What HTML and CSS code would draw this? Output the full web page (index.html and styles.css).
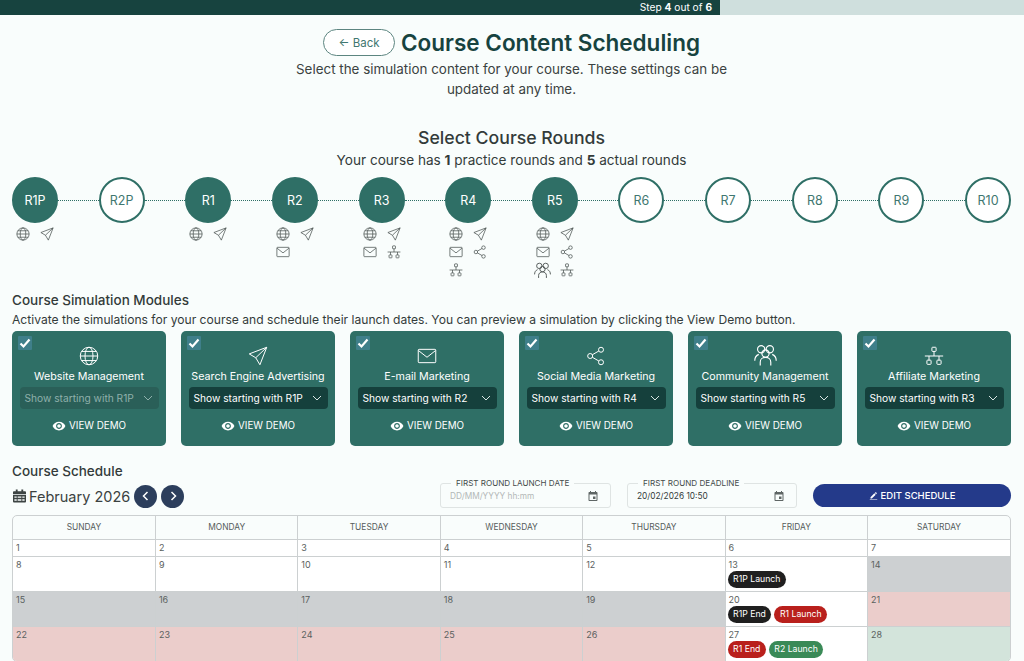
FILE: index.html
```html
<!DOCTYPE html>
<html lang="en">
<head>
    <meta charset="UTF-8">
    <title>Course Content Scheduling</title>
    <link rel="stylesheet" href="styles.css">
</head>
<body>

<!-- icon sprite, used all over the page -->
<svg class="sprite" xmlns="http://www.w3.org/2000/svg">
    <symbol id="i-globe" viewBox="0 0 24 24"><circle cx="12" cy="12" r="10.5"/><ellipse cx="12" cy="12" rx="4.8" ry="10.5"/><path d="M1.5 12h21M3.2 6.5h17.6M3.2 17.5h17.6"/></symbol>
    <symbol id="i-send" viewBox="0 0 24 24"><path d="M22.5 1.5 1.5 9.5l7.8 4.6 5 8.4zM22.5 1.5 9.3 14.1"/></symbol>
    <symbol id="i-mail" viewBox="0 0 24 24"><rect x="1.5" y="4" width="21" height="16" rx="1"/><path d="m1.8 5.5 10.2 8 10.2-8"/></symbol>
    <symbol id="i-share" viewBox="0 0 24 24"><circle cx="18" cy="4.5" r="3"/><circle cx="5" cy="12" r="3"/><circle cx="18" cy="19.5" r="3"/><path d="m7.6 10.5 7.8-4.500M7.6 13.500l7.8 4.500"/></symbol>
    <symbol id="i-people" viewBox="0 0 24 24"><circle cx="7.5" cy="5.5" r="3.8"/><circle cx="16.5" cy="5.5" r="3.8"/><circle cx="12" cy="10" r="3.8"/><path d="M6.500 22.500v-3.500c0-3 2.400-5 5.500-5s5.500 2 5.500 5v3.500M5 10.800C2.500 11.800.8 14 .8 17.500M19 10.800c2.500 1 4.200 3.200 4.200 6.700"/></symbol>
    <symbol id="i-tree" viewBox="0 0 24 24"><rect x="9.500" y="1.500" width="5" height="5" rx=".8"/><rect x="3.500" y="17" width="5" height="5" rx=".8"/><rect x="15.500" y="17" width="5" height="5" rx=".8"/><path d="M12 6.500v5.500M1 12h22M6 12v5M18 12v5"/></symbol>
    <symbol id="i-eye" viewBox="0 0 24 24"><path d="M12 4.500C7 4.500 2.730 7.610 1 12c1.730 4.390 6 7.500 11 7.500s9.270-3.110 11-7.500c-1.730-4.390-6-7.500-11-7.500zM12 17c-2.760 0-5-2.240-5-5s2.240-5 5-5 5 2.240 5 5-2.240 5-5 5zm0-8c-1.660 0-3 1.340-3 3s1.340 3 3 3 3-1.340 3-3-1.340-3-3-3z"/></symbol>
    <symbol id="i-event" viewBox="0 0 24 24"><path d="M19 4h-1V2h-2v2H8V2H6v2H5c-1.110 0-2 .900-2 2v14c0 1.100.890 2 2 2h14c1.100 0 2-.900 2-2V6c0-1.100-.900-2-2-2zm0 16H5V9h14v11zM12 13h5v5h-5z"/></symbol>
</svg>

<div class="progress">
    <div class="progress-done">Step <b>4</b> out of <b>6</b></div>
</div>

<main>
    <header class="intro">
        <div class="intro-title">
            <button class="back-btn">&#8592; Back</button>
            <h1>Course Content Scheduling</h1>
        </div>
        <p>Select the simulation content for your course. These settings can be<br>updated at any time.</p>
    </header>

    <section class="rounds-head">
        <h2>Select Course Rounds</h2>
        <p>Your course has <b>1</b> practice rounds and <b>5</b> actual rounds</p>
    </section>

    <div class="rounds">
        <div class="round">
            <div class="circle on">R1P</div>
            <div class="round-icons">
                <svg class="ico"><use href="#i-globe"/></svg><svg class="ico"><use href="#i-send"/></svg>
            </div>
        </div>
        <div class="link"></div>
        <div class="round"><div class="circle">R2P</div></div>
        <div class="link"></div>
        <div class="round">
            <div class="circle on">R1</div>
            <div class="round-icons">
                <svg class="ico"><use href="#i-globe"/></svg><svg class="ico"><use href="#i-send"/></svg>
            </div>
        </div>
        <div class="link"></div>
        <div class="round">
            <div class="circle on">R2</div>
            <div class="round-icons">
                <svg class="ico"><use href="#i-globe"/></svg><svg class="ico"><use href="#i-send"/></svg>
                <svg class="ico"><use href="#i-mail"/></svg>
            </div>
        </div>
        <div class="link"></div>
        <div class="round">
            <div class="circle on">R3</div>
            <div class="round-icons">
                <svg class="ico"><use href="#i-globe"/></svg><svg class="ico"><use href="#i-send"/></svg>
                <svg class="ico"><use href="#i-mail"/></svg><svg class="ico"><use href="#i-tree"/></svg>
            </div>
        </div>
        <div class="link"></div>
        <div class="round">
            <div class="circle on">R4</div>
            <div class="round-icons">
                <svg class="ico"><use href="#i-globe"/></svg><svg class="ico"><use href="#i-send"/></svg>
                <svg class="ico"><use href="#i-mail"/></svg><svg class="ico"><use href="#i-share"/></svg>
                <svg class="ico"><use href="#i-tree"/></svg>
            </div>
        </div>
        <div class="link"></div>
        <div class="round">
            <div class="circle on">R5</div>
            <div class="round-icons">
                <svg class="ico"><use href="#i-globe"/></svg><svg class="ico"><use href="#i-send"/></svg>
                <svg class="ico"><use href="#i-mail"/></svg><svg class="ico"><use href="#i-share"/></svg>
                <svg class="ico wide"><use href="#i-people"/></svg><svg class="ico"><use href="#i-tree"/></svg>
            </div>
        </div>
        <div class="link"></div>
        <div class="round"><div class="circle">R6</div></div>
        <div class="link"></div>
        <div class="round"><div class="circle">R7</div></div>
        <div class="link"></div>
        <div class="round"><div class="circle">R8</div></div>
        <div class="link"></div>
        <div class="round"><div class="circle">R9</div></div>
        <div class="link"></div>
        <div class="round"><div class="circle">R10</div></div>
    </div>

    <section class="modules">
        <h3>Course Simulation Modules</h3>
        <p>Activate the simulations for your course and schedule their launch dates. You can preview a simulation by clicking the View Demo button.</p>
        <div class="cards">
            <div class="card">
                <span class="check"><svg viewBox="0 0 14 14"><path d="M2.500 7.500 5.500 10.500 11.500 3.500"/></svg></span>
                <svg class="card-ico"><use href="#i-globe"/></svg>
                <div class="card-name">Website Management</div>
                <div class="pick off"><span>Show starting with R1P</span><svg viewBox="0 0 12 12"><path d="m2 4 4 4 4-4"/></svg></div>
                <div class="demo"><svg><use href="#i-eye"/></svg>VIEW DEMO</div>
            </div>
            <div class="card">
                <span class="check"><svg viewBox="0 0 14 14"><path d="M2.500 7.500 5.500 10.500 11.500 3.500"/></svg></span>
                <svg class="card-ico"><use href="#i-send"/></svg>
                <div class="card-name">Search Engine Advertising</div>
                <div class="pick"><span>Show starting with R1P</span><svg viewBox="0 0 12 12"><path d="m2 4 4 4 4-4"/></svg></div>
                <div class="demo"><svg><use href="#i-eye"/></svg>VIEW DEMO</div>
            </div>
            <div class="card">
                <span class="check"><svg viewBox="0 0 14 14"><path d="M2.500 7.500 5.500 10.500 11.500 3.500"/></svg></span>
                <svg class="card-ico"><use href="#i-mail"/></svg>
                <div class="card-name">E-mail Marketing</div>
                <div class="pick"><span>Show starting with R2</span><svg viewBox="0 0 12 12"><path d="m2 4 4 4 4-4"/></svg></div>
                <div class="demo"><svg><use href="#i-eye"/></svg>VIEW DEMO</div>
            </div>
            <div class="card">
                <span class="check"><svg viewBox="0 0 14 14"><path d="M2.500 7.500 5.500 10.500 11.500 3.500"/></svg></span>
                <svg class="card-ico"><use href="#i-share"/></svg>
                <div class="card-name">Social Media Marketing</div>
                <div class="pick"><span>Show starting with R4</span><svg viewBox="0 0 12 12"><path d="m2 4 4 4 4-4"/></svg></div>
                <div class="demo"><svg><use href="#i-eye"/></svg>VIEW DEMO</div>
            </div>
            <div class="card">
                <span class="check"><svg viewBox="0 0 14 14"><path d="M2.500 7.500 5.500 10.500 11.500 3.500"/></svg></span>
                <svg class="card-ico wide"><use href="#i-people"/></svg>
                <div class="card-name">Community Management</div>
                <div class="pick"><span>Show starting with R5</span><svg viewBox="0 0 12 12"><path d="m2 4 4 4 4-4"/></svg></div>
                <div class="demo"><svg><use href="#i-eye"/></svg>VIEW DEMO</div>
            </div>
            <div class="card">
                <span class="check"><svg viewBox="0 0 14 14"><path d="M2.500 7.500 5.500 10.500 11.500 3.500"/></svg></span>
                <svg class="card-ico"><use href="#i-tree"/></svg>
                <div class="card-name">Affiliate Marketing</div>
                <div class="pick"><span>Show starting with R3</span><svg viewBox="0 0 12 12"><path d="m2 4 4 4 4-4"/></svg></div>
                <div class="demo"><svg><use href="#i-eye"/></svg>VIEW DEMO</div>
            </div>
        </div>
    </section>

    <section class="schedule">
        <h3>Course Schedule</h3>
        <div class="sched-bar">
            <div class="month">
                <svg class="month-ico" viewBox="0 0 14 14"><path d="M3 0h2v2h4V0h2v2h2a1 1 0 0 1 1 1v2H0V3a1 1 0 0 1 1-1h2zM0 6h14v7a1 1 0 0 1-1 1H1a1 1 0 0 1-1-1zm1.500 1.500v1.500h2.500V7.500zm3.500 0v1.500h4V7.500zm5 0v1.500h2.500V7.500zm-8.500 3V12h2.500v-1.500zm3.500 0V12h4v-1.500zm5 0V12h2.500v-1.500z"/></svg>
                <span>February 2026</span>
                <button class="nav-btn"><svg viewBox="0 0 12 12"><path d="M7.500 2 3.500 6l4 4"/></svg></button>
                <button class="nav-btn"><svg viewBox="0 0 12 12"><path d="m4.500 2 4 4-4 4"/></svg></button>
            </div>
            <div class="date-field">
                <label>FIRST ROUND LAUNCH DATE</label>
                <span class="placeholder">DD/MM/YYYY hh:mm</span>
                <svg><use href="#i-event"/></svg>
            </div>
            <div class="date-field">
                <label>FIRST ROUND DEADLINE</label>
                <span>20/02/2026 10:50</span>
                <svg><use href="#i-event"/></svg>
            </div>
            <button class="edit-btn">
                <svg viewBox="0 0 24 24"><path d="M4 16.500V20h3.500L17.800 9.700l-3.500-3.500zM20.700 6.800c.4-.4.4-1 0-1.400l-2.100-2.100c-.4-.4-1-.4-1.400 0l-1.700 1.700 3.500 3.500zM2 22h20v1.500H2z"/></svg>
                EDIT SCHEDULE
            </button>
        </div>
        <div class="cal-wrap">
            <table class="cal">
                <thead>
                    <tr><th>SUNDAY</th><th>MONDAY</th><th>TUESDAY</th><th>WEDNESDAY</th><th>THURSDAY</th><th>FRIDAY</th><th>SATURDAY</th></tr>
                </thead>
                <tbody>
                    <tr class="short"><td>1</td><td>2</td><td>3</td><td>4</td><td>5</td><td>6</td><td>7</td></tr>
                    <tr>
                        <td>8</td><td>9</td><td>10</td><td>11</td><td>12</td>
                        <td>13<div class="tags"><span class="tag black">R1P Launch</span></div></td>
                        <td class="grey">14</td>
                    </tr>
                    <tr>
                        <td class="grey">15</td><td class="grey">16</td><td class="grey">17</td><td class="grey">18</td><td class="grey">19</td>
                        <td>20<div class="tags"><span class="tag black">R1P End</span><span class="tag red">R1 Launch</span></div></td>
                        <td class="pink">21</td>
                    </tr>
                    <tr>
                        <td class="pink">22</td><td class="pink">23</td><td class="pink">24</td><td class="pink">25</td><td class="pink">26</td>
                        <td>27<div class="tags"><span class="tag red">R1 End</span><span class="tag green">R2 Launch</span></div></td>
                        <td class="mint">28</td>
                    </tr>
                </tbody>
            </table>
        </div>
    </section>
</main>

</body>
</html>
```

FILE: styles.css
```css
* {
    box-sizing: border-box;
}

body {
    margin: 0;
    font-family: "Inter", "Liberation Sans", sans-serif;
    background-color: #f9fdfc;
    color: #333b3a;
    overflow: hidden;
}

h1, h2, h3, p {
    margin: 0;
}

.sprite {
    display: none;
}

/* top progress bar */
.progress {
    height: 15px;
    background-color: #cfdfdd;
}

.progress-done {
    width: 720px;
    height: 15px;
    background-color: #17433f;
    color: #ffffff;
    font-size: 10.2px;
    line-height: 14px;
    text-align: right;
    padding-right: 8px;
}

main {
    padding: 0 13px 0 12px;
}

.intro {
    text-align: center;
    padding-top: 14px;
}

.intro-title {
    display: flex;
    justify-content: center;
    align-items: center;
    gap: 6px;
    height: 27px;
}

.back-btn {
    width: 72px;
    height: 27px;
    border: 1px solid #5c8580;
    border-radius: 14px;
    background: #ffffff;
    color: #3f7770;
    font-family: inherit;
    font-size: 11.5px;
    padding: 0;
}

h1 {
    font-size: 22.5px;
    font-weight: 600;
    color: #17433f;
    white-space: nowrap;
}

.intro p {
    font-size: 13.4px;
    line-height: 20px;
    margin-top: 3px;
    color: #3b4241;
}

.rounds-head {
    text-align: center;
    margin-top: 28px;
}

.rounds-head h2 {
    font-size: 17.7px;
    font-weight: 500;
    line-height: 22px;
}

.rounds-head p {
    font-size: 13.6px;
    line-height: 20px;
    margin-top: 1px;
}

/* round circles */
.rounds {
    display: flex;
    margin-top: 7px;
    height: 102px;
}

.round {
    width: 46px;
    flex: none;
    display: flex;
    flex-direction: column;
    align-items: center;
}

.circle {
    width: 46px;
    height: 46px;
    border-radius: 50%;
    border: 2px solid #2f6f66;
    color: #3f7770;
    background: #ffffff;
    display: flex;
    align-items: center;
    justify-content: center;
    font-size: 12.5px;
}

.circle.on {
    background: #2f6f66;
    color: #ffffff;
}

.link {
    flex: 1;
    height: 0;
    margin-top: 23px;
    border-top: 1px dotted #2f6f66;
}

.round-icons {
    display: grid;
    grid-template-columns: 24px 24px;
    grid-auto-rows: 18px;
    justify-items: center;
    align-items: center;
    margin-top: 2px;
    flex: none;
}

.ico {
    width: 14px;
    height: 14px;
    fill: none;
    stroke: #4d5453;
    stroke-width: 1.3;
}

.ico.wide {
    width: 17px;
    height: 17px;
}

/* modules */
.modules {
    margin-top: 12px;
}

h3 {
    font-size: 13.5px;
    font-weight: 500;
    line-height: 18px;
    color: #333b3a;
}

.modules p {
    font-size: 12.1px;
    line-height: 16px;
    margin-top: 3px;
}

.cards {
    display: grid;
    grid-template-columns: repeat(6, 1fr);
    gap: 15px;
    margin-top: 3px;
}

.card {
    position: relative;
    height: 115px;
    background: #2f6f66;
    border-radius: 5px;
    color: #ffffff;
    display: flex;
    flex-direction: column;
    align-items: center;
    padding-top: 15px;
}

.check {
    position: absolute;
    left: 6px;
    top: 5px;
    width: 14px;
    height: 14px;
    background: #3f7f8a;
    border-radius: 1px;
}

.check svg {
    display: block;
    fill: none;
    stroke: #ffffff;
    stroke-width: 2.200;
}

.card-ico {
    flex: none;
    width: 20px;
    height: 20px;
    fill: none;
    stroke: #ffffff;
    stroke-width: 1.200;
}

.card-ico.wide {
    width: 23px;
    height: 23px;
    margin: -2px 0 -1px;
}

.card-name {
    font-size: 10.7px;
    line-height: 14px;
    margin-top: 4px;
    white-space: nowrap;
}

.pick {
    width: 139px;
    height: 22px;
    margin-top: 3px;
    padding: 0 5px;
    border-radius: 4px;
    background: #15403c;
    font-size: 10.2px;
    display: flex;
    align-items: center;
    justify-content: space-between;
    white-space: nowrap;
}

.pick svg {
    width: 12px;
    height: 12px;
    fill: none;
    stroke: #d9e6e4;
    stroke-width: 1;
}

.pick.off {
    background: #2a5f58;
    color: #8fb0ab;
}

.pick.off svg {
    stroke: #8fb0ab;
}

.demo {
    display: flex;
    align-items: center;
    gap: 3px;
    font-size: 9.8px;
    margin-top: 10px;
    line-height: 14px;
}

.demo svg {
    width: 14px;
    height: 14px;
    fill: #ffffff;
}

/* schedule */
.schedule {
    margin-top: 16px;
}

.sched-bar {
    display: flex;
    align-items: flex-start;
    margin-top: 3px;
    height: 32px;
}

.month {
    display: flex;
    align-items: center;
    height: 24px;
    width: 428px;
    font-size: 14.5px;
    color: #3b4241;
    margin-top: 1px;
}

.month-ico {
    width: 13px;
    height: 14px;
    margin: 0 3px 0 1px;
    fill: #3d4443;
}

.nav-btn {
    width: 23px;
    height: 23px;
    border: none;
    border-radius: 50%;
    background: #2c3e5c;
    padding: 0;
    margin-left: 4px;
    display: flex;
    align-items: center;
    justify-content: center;
}

.nav-btn svg {
    width: 12px;
    height: 12px;
    fill: none;
    stroke: #ffffff;
    stroke-width: 1.500;
}

.date-field {
    position: relative;
    width: 171px;
    height: 25px;
    margin-right: 16px;
    border: 1px solid #dfe4e3;
    border-radius: 3px;
    display: flex;
    align-items: center;
    justify-content: space-between;
    padding: 0 11px 0 9px;
    font-size: 8.300px;
    color: #333b3a;
}

.date-field:nth-child(3) {
    width: 170px;
}

.date-field label {
    position: absolute;
    left: 10px;
    top: -6px;
    padding: 0 5px;
    background: #f9fdfc;
    font-size: 8.100px;
    line-height: 11px;
    color: #444b4a;
    white-space: nowrap;
}

.date-field .placeholder {
    color: #b3b8b7;
}

.date-field svg {
    width: 12px;
    height: 12px;
    fill: #5f6665;
}

.edit-btn {
    width: 198px;
    height: 23px;
    border: none;
    border-radius: 12px;
    background: #243a8a;
    color: #ffffff;
    font-family: inherit;
    font-size: 9.500px;
    font-weight: 500;
    display: flex;
    align-items: center;
    justify-content: center;
    gap: 3px;
    padding: 0;
    margin-top: 1px;
}

.edit-btn svg {
    width: 9px;
    height: 9px;
    fill: #ffffff;
}

.cal-wrap {
    border: 1px solid #ccd0d1;
    border-radius: 5px;
    overflow: hidden;
}

.cal {
    width: 100%;
    border-collapse: collapse;
    table-layout: fixed;
    font-size: 9px;
}

.cal th {
    height: 23px;
    font-size: 8.400px;
    font-weight: 400;
    text-align: center;
    color: #555c5b;
    border: 1px solid #ccd0d1;
    border-top: none;
}

.cal td {
    height: 35px;
    vertical-align: top;
    background: #ffffff;
    color: #5a6160;
    padding: 2px 3px;
    line-height: 12px;
    border: 1px solid #ccd0d1;
}

.cal tr:last-child td {
    border-bottom: none;
}

.cal th:first-child, .cal td:first-child {
    border-left: none;
}

.cal th:last-child, .cal td:last-child {
    border-right: none;
}

.cal .short td {
    height: 17px;
}

.cal td.grey {
    background: #cdd0d2;
}

.cal td.pink {
    background: #ebcdcb;
}

.cal td.mint {
    background: #d3e4db;
}

.tags {
    display: flex;
    gap: 3px;
    margin-left: -1px;
}

.tag {
    height: 17px;
    padding: 0 5.5px;
    border-radius: 9px;
    color: #ffffff;
    font-size: 8.700px;
    line-height: 17px;
    white-space: nowrap;
}

.tag.black {
    background: #1f1f1f;
}

.tag.red {
    background: #b9201c;
}

.tag.green {
    background: #3a8a57;
}
```
